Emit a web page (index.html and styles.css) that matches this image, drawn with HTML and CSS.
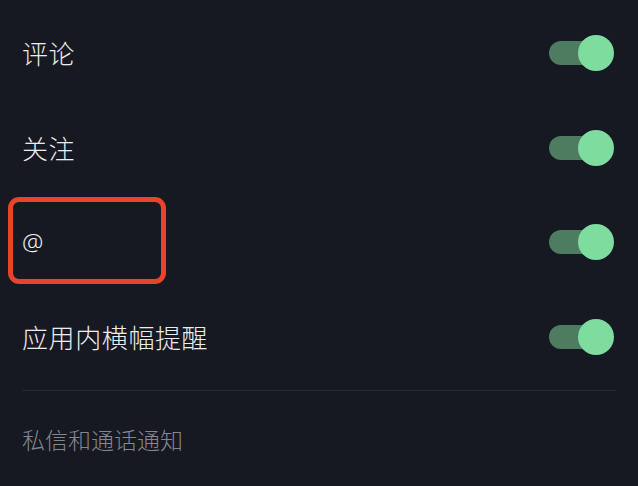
FILE: index.html
```html
<!DOCTYPE html>
<html lang="zh-CN">
<head>
<meta charset="utf-8">
<link rel="stylesheet" href="styles.css">
</head>
<body>
<div class="page">
  <div class="list">
    <div class="row">
      <span class="label">评论</span>
      <div class="toggle"><span class="track"></span><span class="knob"></span></div>
    </div>
    <div class="row">
      <span class="label">关注</span>
      <div class="toggle"><span class="track"></span><span class="knob"></span></div>
    </div>
    <div class="row highlighted">
      <span class="label at">@</span>
      <div class="toggle"><span class="track"></span><span class="knob"></span></div>
      <span class="mark"></span>
    </div>
    <div class="row">
      <span class="label">应用内横幅提醒</span>
      <div class="toggle"><span class="track"></span><span class="knob"></span></div>
    </div>
  </div>
  <div class="divider"></div>
  <div class="section-title">私信和通话通知</div>
</div>
</body>
</html>
```
FILE: styles.css
```css
html, body {
  margin: 0;
  padding: 0;
  background: #161822;
}
.page {
  width: 638px;
  height: 486px;
  overflow: hidden;
  background: #161822;
  font-family: "Noto Sans CJK SC", "Noto Sans", sans-serif;
  padding-top: 6px;
  box-sizing: border-box;
}
.list {
  display: flex;
  flex-direction: column;
}
.row {
  position: relative;
  height: 94.5px;
  display: flex;
  align-items: center;
  justify-content: space-between;
  padding: 0 24px 0 22px;
}
.label {
  color: #ebecee;
  font-size: 26px;
  font-weight: 300;
  line-height: 1;
  letter-spacing: 0.6px;
}
.label.at {
  font-family: "Noto Sans", "Liberation Sans", sans-serif;
  font-size: 24px;
  letter-spacing: 0;
}
.toggle {
  position: relative;
  width: 65px;
  height: 36px;
}
.track {
  position: absolute;
  left: 0;
  top: 6px;
  width: 52px;
  height: 24px;
  border-radius: 12px;
  background: #4e7c60;
}
.knob {
  position: absolute;
  right: 0;
  top: 0;
  width: 36px;
  height: 36px;
  border-radius: 50%;
  background: #7edc9f;
}
.mark {
  position: absolute;
  left: 8px;
  top: 2px;
  width: 158px;
  height: 87px;
  box-sizing: border-box;
  border: 5.5px solid #e8442b;
  border-radius: 11px;
}
.divider {
  margin: 6px 22px 0 22px;
  height: 1px;
  background: #252833;
}
.section-title {
  padding: 35px 22px 0 22px;
  color: #85878e;
  font-size: 23px;
  font-weight: 300;
  line-height: 26px;
}
```
